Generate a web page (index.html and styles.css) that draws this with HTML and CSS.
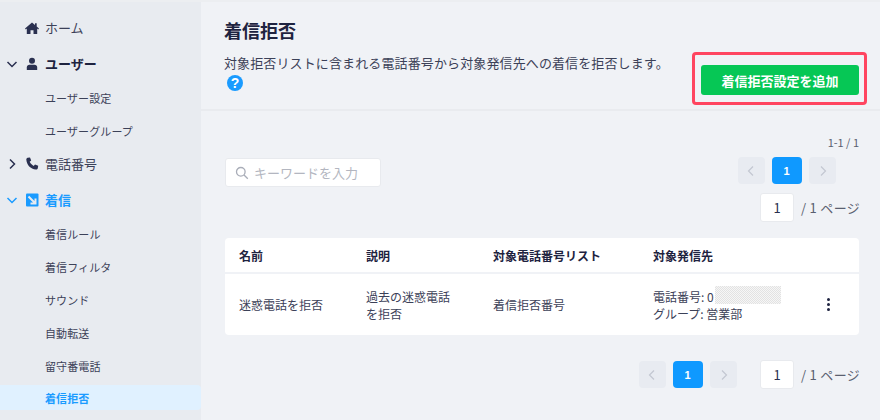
FILE: index.html
```html
<!DOCTYPE html>
<html lang="ja">
<head>
<meta charset="utf-8">
<title>着信拒否</title>
<link rel="stylesheet" href="styles.css">
</head>
<body>
<div class="app">
  <nav class="side">
    <div class="item top">
      <span class="caret"></span>
      <svg class="ico" viewBox="0 0 14 14"><path fill="#2a3050" d="M7 1.500 0 7.600l.8.9 1-.9V13h3.700V9.300h3V13h3.700V7.600l1 .9.800-.9-2.300-2V2.300h-1.700v1.800z"/></svg>
      <span>ホーム</span>
    </div>
    <div class="item top open">
      <svg class="caret" viewBox="0 0 12 12"><path d="M1.500 4 6 8.500 10.500 4" fill="none" stroke="#2a3050" stroke-width="1.500"/></svg>
      <svg class="ico" viewBox="0 0 14 14"><circle cx="7" cy="3.800" r="3" fill="#2a3050"/><path fill="#2a3050" d="M1.800 13v-2.500C1.800 8.800 3 7.800 4.500 7.800h5c1.500 0 2.700 1 2.700 2.700V13z"/></svg>
      <b>ユーザー</b>
    </div>
    <div class="item sub">ユーザー設定</div>
    <div class="item sub">ユーザーグループ</div>
    <div class="item top">
      <svg class="caret" viewBox="0 0 12 12"><path d="M4 1.500 8.500 6 4 10.500" fill="none" stroke="#2a3050" stroke-width="1.500"/></svg>
      <svg class="ico" viewBox="0 0 14 14"><path fill="#2a3050" d="M2.600.8 5 .4l1.200 3.200-1.500 1.200c.7 1.600 2.200 3.200 4 4.100l1.300-1.500 3.200 1.300-.4 2.500c-.2.900-1 1.500-1.900 1.400C5.500 12.200 1.700 8 1.300 2.600c0-.9.500-1.600 1.300-1.800z"/></svg>
      <span>電話番号</span>
    </div>
    <div class="item top blue open">
      <svg class="caret" viewBox="0 0 12 12"><path d="M1.500 4 6 8.500 10.500 4" fill="none" stroke="#1a9bff" stroke-width="1.500"/></svg>
      <svg class="ico" viewBox="0 0 14 14"><rect x="1" y="0.500" width="12.500" height="13" rx="1" fill="#1a9bff"/><path d="M3.500 3.500l6.500 6.500M10.500 5.500v5h-5" fill="none" stroke="#e8ebf0" stroke-width="2"/></svg>
      <b>着信</b>
    </div>
    <div class="item sub">着信ルール</div>
    <div class="item sub">着信フィルタ</div>
    <div class="item sub">サウンド</div>
    <div class="item sub">自動転送</div>
    <div class="item sub">留守番電話</div>
    <div class="item sub active">着信拒否</div>
  </nav>
  <main class="main">
    <header class="head">
      <div class="head-text">
        <h1>着信拒否</h1>
        <p>対象拒否リストに含まれる電話番号から対象発信先への着信を拒否します。</p>
        <svg class="help" viewBox="0 0 16 16"><circle cx="8" cy="8" r="8" fill="#1a9bff"/><text x="8" y="13" text-anchor="middle" class="help-q">?</text></svg>
      </div>
      <div class="hilite"><button class="add">着信拒否設定を追加</button></div>
    </header>
    <section class="body">
      <div class="count">1-1 / 1</div>
      <div class="tools">
        <div class="search">
          <svg viewBox="0 0 14 14"><circle cx="5.800" cy="5.800" r="4.300" fill="none" stroke="#a9adb8" stroke-width="1.300"/><path d="M9 9l3.800 3.800" stroke="#a9adb8" stroke-width="1.300"/></svg>
          <span>キーワードを入力</span>
        </div>
        <div class="pager-stack">
          <div class="pages">
            <span class="pg"><svg viewBox="0 0 12 12"><path d="M8 1.500 3.500 6 8 10.500" fill="none" stroke="#c3c7d1" stroke-width="1.200"/></svg></span>
            <span class="pg on">1</span>
            <span class="pg"><svg viewBox="0 0 12 12"><path d="M4 1.500 8.500 6 4 10.500" fill="none" stroke="#c3c7d1" stroke-width="1.200"/></svg></span>
          </div>
          <div class="jump"><span class="box">1</span><span class="of">/ 1 ページ</span></div>
        </div>
      </div>
      <div class="table">
        <div class="row thead">
          <span>名前</span><span>説明</span><span>対象電話番号リスト</span><span>対象発信先</span><span></span>
        </div>
        <div class="row tbody">
          <span>迷惑電話を拒否</span>
          <span>過去の迷惑電話<br>を拒否</span>
          <span>着信拒否番号</span>
          <span>電話番号: 0<i class="mask"></i><br>グループ: 営業部</span>
          <span class="kebab"><i></i><i></i><i></i></span>
        </div>
      </div>
      <div class="bottom">
        <div class="pages">
          <span class="pg"><svg viewBox="0 0 12 12"><path d="M8 1.500 3.500 6 8 10.500" fill="none" stroke="#c3c7d1" stroke-width="1.200"/></svg></span>
          <span class="pg on">1</span>
          <span class="pg"><svg viewBox="0 0 12 12"><path d="M4 1.500 8.500 6 4 10.500" fill="none" stroke="#c3c7d1" stroke-width="1.200"/></svg></span>
        </div>
        <div class="jump"><span class="box">1</span><span class="of">/ 1 ページ</span></div>
      </div>
    </section>
  </main>
</div>
</body>
</html>
```
FILE: styles.css
```css
* { box-sizing: border-box; }
html, body { margin: 0; height: 420px; overflow: hidden; }
body {
  font-family: "Noto Sans CJK JP", "Noto Sans", sans-serif;
  color: #2a3050;
  background: #f0f2f6;
}
.app { display: flex; height: 420px; border-top: 2px solid #eceef1; }
.side { width: 201px; flex: none; background: #e8ebf0; padding-top: 9px; }
.item { display: flex; align-items: center; height: 33px; font-size: 13px; color: #3c4158; }
.item.top { padding-left: 6px; margin-bottom: 3px; }
.item.top.open { margin-bottom: 1px; }
.caret { width: 12px; height: 12px; flex: none; margin-right: 7px; }
.ico { width: 14px; height: 14px; flex: none; margin-right: 6px; }
.item b { font-weight: 700; color: #1e2340; }
.item.blue b { color: #1a9bff; }
.item.sub { padding-left: 45px; font-size: 11px; letter-spacing: 0.1px; }
.item.sub.active { color: #1a9bff; font-weight: 700; background: #e0f1ff; height: 25px; margin-top: 3px; border-radius: 0 4px 4px 0; }

.main { flex: 1; min-width: 0; }
.head { height: 109px; border-bottom: 2px solid #e9ebef; padding: 15px 13px 0 23px; display: flex; justify-content: space-between; }
h1 { margin: 0; font-size: 18px; line-height: 26px; color: #1e2340; font-weight: 700; }
.head-text p { margin: 10px 0 0; font-size: 13px; line-height: 19px; letter-spacing: 0.12px; color: #3c4158; }
.help { display: block; width: 16px; height: 16px; margin: 3px 0 0 3px; }
.help-q { font: 700 14px "Liberation Sans", sans-serif; fill: #fff; }
.hilite { margin-top: 35px; height: 53px; width: 175px; border: 3px solid #ff4560; border-radius: 4px; padding: 10px 6px; }
.add { display: block; width: 158px; height: 30px; border: 0; padding: 0; border-radius: 3px; background: #06c755; color: #fff; font: 700 13px "Noto Sans CJK JP", sans-serif; }

.body { padding: 24px 21px 0 24px; }
.count { font-size: 11px; line-height: 14px; text-align: right; color: #5a5f70; }
.tools { display: flex; justify-content: space-between; margin-top: 8px; height: 67px; }
.search { width: 156px; height: 29px; margin-top: 1px; background: #fff; border: 1px solid #e8eaee; border-radius: 3px; display: flex; align-items: center; padding-left: 9px; gap: 5px; font-size: 13px; color: #b3b6c0; }
.search svg { width: 14px; height: 14px; }
.pager-stack { display: flex; flex-direction: column; align-items: flex-end; }
.pages { display: flex; gap: 7px; align-items: center; }
.pager-stack .pages { margin-right: 23px; }
.pg { width: 27px; height: 27px; border-radius: 4px; background: #e8ebf1; display: flex; align-items: center; justify-content: center; }
.pg svg { width: 12px; height: 12px; }
.pg.on { width: 30px; margin-right: 0.500px; background: #0f99ff; color: #fff; font: 700 11px "Liberation Sans", sans-serif; }
.jump { display: flex; align-items: center; gap: 7px; font-size: 13px; color: #5a5f70; }
.pager-stack .jump { margin-top: 9px; }
.of { width: 58px; white-space: nowrap; letter-spacing: 0.3px; }
.box { width: 34px; height: 29px; background: #fff; border: 1px solid #e8eaee; border-radius: 3px; display: flex; align-items: center; justify-content: center; font-size: 13px; color: #2a3050; }

.table { margin-top: 14px; }
.row { display: grid; grid-template-columns: 127px 127px 160px 157px 1fr; padding-left: 14px; background: #fff; align-items: center; font-size: 12px; color: #3c4158; }
.thead { height: 34px; border-radius: 4px 4px 0 0; font-weight: 700; color: #1e2340; }
.tbody { height: 61px; margin-top: 2px; line-height: 17px; border-radius: 0 0 4px 4px; }
.mask { display: inline-block; width: 66px; height: 18px; vertical-align: -2px; margin: -4px 0 0 1px; background: repeating-conic-gradient(#e2e2e2 0 25%, #f6f6f6 0 50%) 0 0 / 2px 2px; }
.kebab { display: flex; flex-direction: column; align-items: center; gap: 1.500px; justify-self: start; margin-left: 16px; width: 5px; }
.kebab i { width: 3.500px; height: 3.500px; border-radius: 50%; background: #1e2340; }
.bottom { display: flex; justify-content: flex-end; align-items: center; gap: 23px; margin-top: 25px; }
```
